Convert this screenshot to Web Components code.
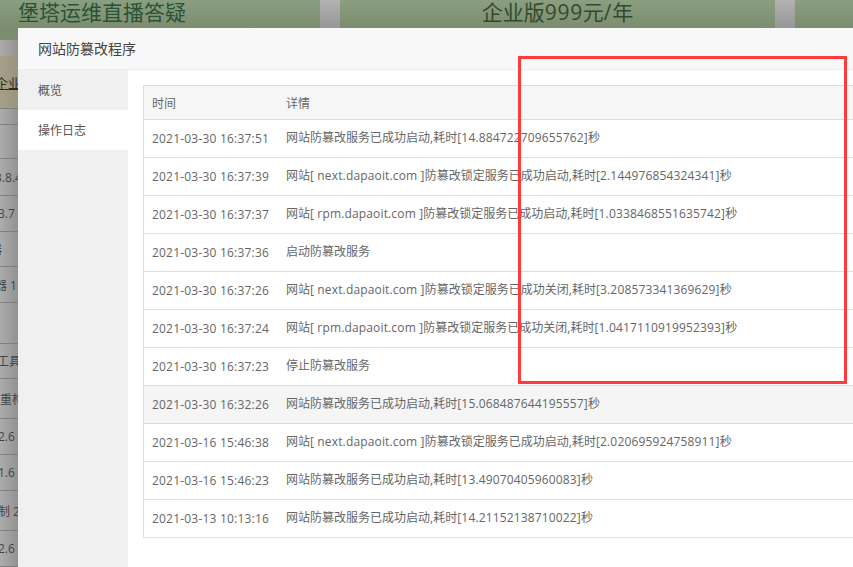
<!DOCTYPE html>
<html lang="zh-CN"><head><meta charset="utf-8">
<style>
html,body{margin:0;padding:0;width:853px;height:567px;overflow:hidden;background:#a3a3a3;font-family:"Liberation Sans","Noto Sans CJK SC",sans-serif}
</style></head><body>
<bt-backdrop></bt-backdrop>
<bt-modal title-text="网站防篡改程序"></bt-modal>
<bt-callout></bt-callout>
<script>
const FONT='"Open Sans","Noto Sans CJK SC",sans-serif';
const lat=s=>s.replace(/[\x21-\x7e ]+/g,m=>`<span class="l">${m}</span>`);
class BtBackdrop extends HTMLElement{
  constructor(){super();
    const rows=[[16,"",0],[53,"企业",-5,"u"],[16,"",0],[34,"",0],[37,"3.8.4",-5],[36,"3.7",-2],[35,"器",-10],[36,"器 1",-5],[41,"",0],[35,"工具",-3],[40,"重构",0],[36,"2.6",-2],[36,"1.6",-2],[40,"制 2",-2],[36,"2.6",-2],[20,"",0]];
    const r=this.attachShadow({mode:"open"});
    r.innerHTML=`<style>
    :host{display:block;width:853px;height:567px;overflow:hidden;background:#9c9c9c;font-family:${FONT};color:#3c3c3c}
    .top{display:grid;grid-template-columns:320px 435px 1fr;column-gap:20px;height:40px;background:linear-gradient(#b2b2b2,#979797 28px)}
    .ban{background:linear-gradient(#8a9f80,#7c8c6f 28px);overflow:hidden;font-size:21px;line-height:24px;color:#2a5236;white-space:nowrap}
    .ban.a{padding-left:18px}.ban.b{text-align:center;color:#334a2c}
    .ban .l{letter-spacing:.7px}
    .left{width:18px;overflow:hidden;white-space:nowrap;font-size:12px;background:linear-gradient(90deg,#acacac,#929292)}
    .row{box-sizing:border-box;border-bottom:1px solid #7f7f7f;display:flex;align-items:center;color:#444}
    .row:first-child{border-bottom:0}
    .row span{display:block;flex:none}
    .tan{background:linear-gradient(90deg,#a6a08b,#9a947e)}
    .tan span{text-decoration:underline;font-size:13px;color:#2f2a1e}
    </style>
    <div class="top"><div class="ban a">堡塔运维直播答疑</div><div class="ban b">${lat("企业版999元/年")}</div><div class="ban"></div></div>
    <div class="left">${rows.map(x=>`<div class="row${x[3]?" tan":""}" style="height:${x[0]}px">${x[1]?`<span style="margin-left:${x[2]}px">${x[1]}</span>`:""}</div>`).join("")}</div>`;
  }
}
class BtModal extends HTMLElement{
  constructor(){super();
    const r=this.attachShadow({mode:"open"});
    const data=[["2021-03-30 16:37:51","网站防篡改服务已成功启动,耗时[14.884722709655762]秒"],
    ["2021-03-30 16:37:39","网站[ next.dapaoit.com ]防篡改锁定服务已成功启动,耗时[2.144976854324341]秒"],
    ["2021-03-30 16:37:37","网站[ rpm.dapaoit.com ]防篡改锁定服务已成功启动,耗时[1.0338468551635742]秒"],
    ["2021-03-30 16:37:36","启动防篡改服务"],
    ["2021-03-30 16:37:26","网站[ next.dapaoit.com ]防篡改锁定服务已成功关闭,耗时[3.208573341369629]秒"],
    ["2021-03-30 16:37:24","网站[ rpm.dapaoit.com ]防篡改锁定服务已成功关闭,耗时[1.0417110919952393]秒"],
    ["2021-03-30 16:37:23","停止防篡改服务"],
    ["2021-03-30 16:32:26","网站防篡改服务已成功启动,耗时[15.068487644195557]秒",1],
    ["2021-03-16 15:46:38","网站[ next.dapaoit.com ]防篡改锁定服务已成功启动,耗时[2.020695924758911]秒"],
    ["2021-03-16 15:46:23","网站防篡改服务已成功启动,耗时[13.49070405960083]秒"],
    ["2021-03-13 10:13:16","网站防篡改服务已成功启动,耗时[14.21152138710022]秒"]];
    r.innerHTML=`<style>
    :host{position:absolute;left:18px;top:28px;width:835px;height:539px;background:#fff;display:flex;flex-direction:column;font-family:${FONT};font-size:12px;color:#666;overflow:hidden}
    header{height:41px;line-height:41px;padding-left:20px;background:#f8f8f8;border-bottom:1px solid #eee;color:#444;font-size:14px;flex:none}
    .body{flex:1;display:flex;min-height:0}
    nav{width:110px;background:#f0f0f0;flex:none;color:#555;font-size:12px}
    nav div{height:40px;line-height:42px;padding-left:20px}
    nav .on{background:#fff}
    main{flex:1;padding:15px 0 0 15px;overflow:hidden}
    .tb{width:711px;border:1px solid #ddd;border-right:0}
    .r{display:grid;grid-template-columns:134px 1fr;height:37px;border-top:1px solid #ddd;align-items:center;white-space:nowrap}
    .r>span{padding-left:8px}
    .r>span+span{padding-bottom:3px}
    .r:first-child{border-top:0;height:33px;background:#f6f6f6}
    .r:first-child>span+span{padding-bottom:0}
    .r.hl{background:#f5f5f5}
    .l{letter-spacing:.2px}
    .r>span+span .l{letter-spacing:.15px}
    </style>
    <header>${this.getAttribute("title-text")}</header>
    <div class="body"><nav><div>概览</div><div class="on">操作日志</div></nav>
    <main><div class="tb"><div class="r"><span>时间</span><span>详情</span></div>
    ${data.map(d=>`<div class="r${d[2]?" hl":""}"><span>${lat(d[0])}</span><span>${lat(d[1])}</span></div>`).join("")}
    </div></main></div>`;
  }
}
class BtCallout extends HTMLElement{
  constructor(){super();this.attachShadow({mode:"open"}).innerHTML=`<style>:host{position:absolute;left:518px;top:56px;width:323px;height:322px;border:3px solid #ff3b3b;pointer-events:none}</style>`;}
}
customElements.define("bt-backdrop",BtBackdrop);
customElements.define("bt-modal",BtModal);
customElements.define("bt-callout",BtCallout);
</script></body></html>
